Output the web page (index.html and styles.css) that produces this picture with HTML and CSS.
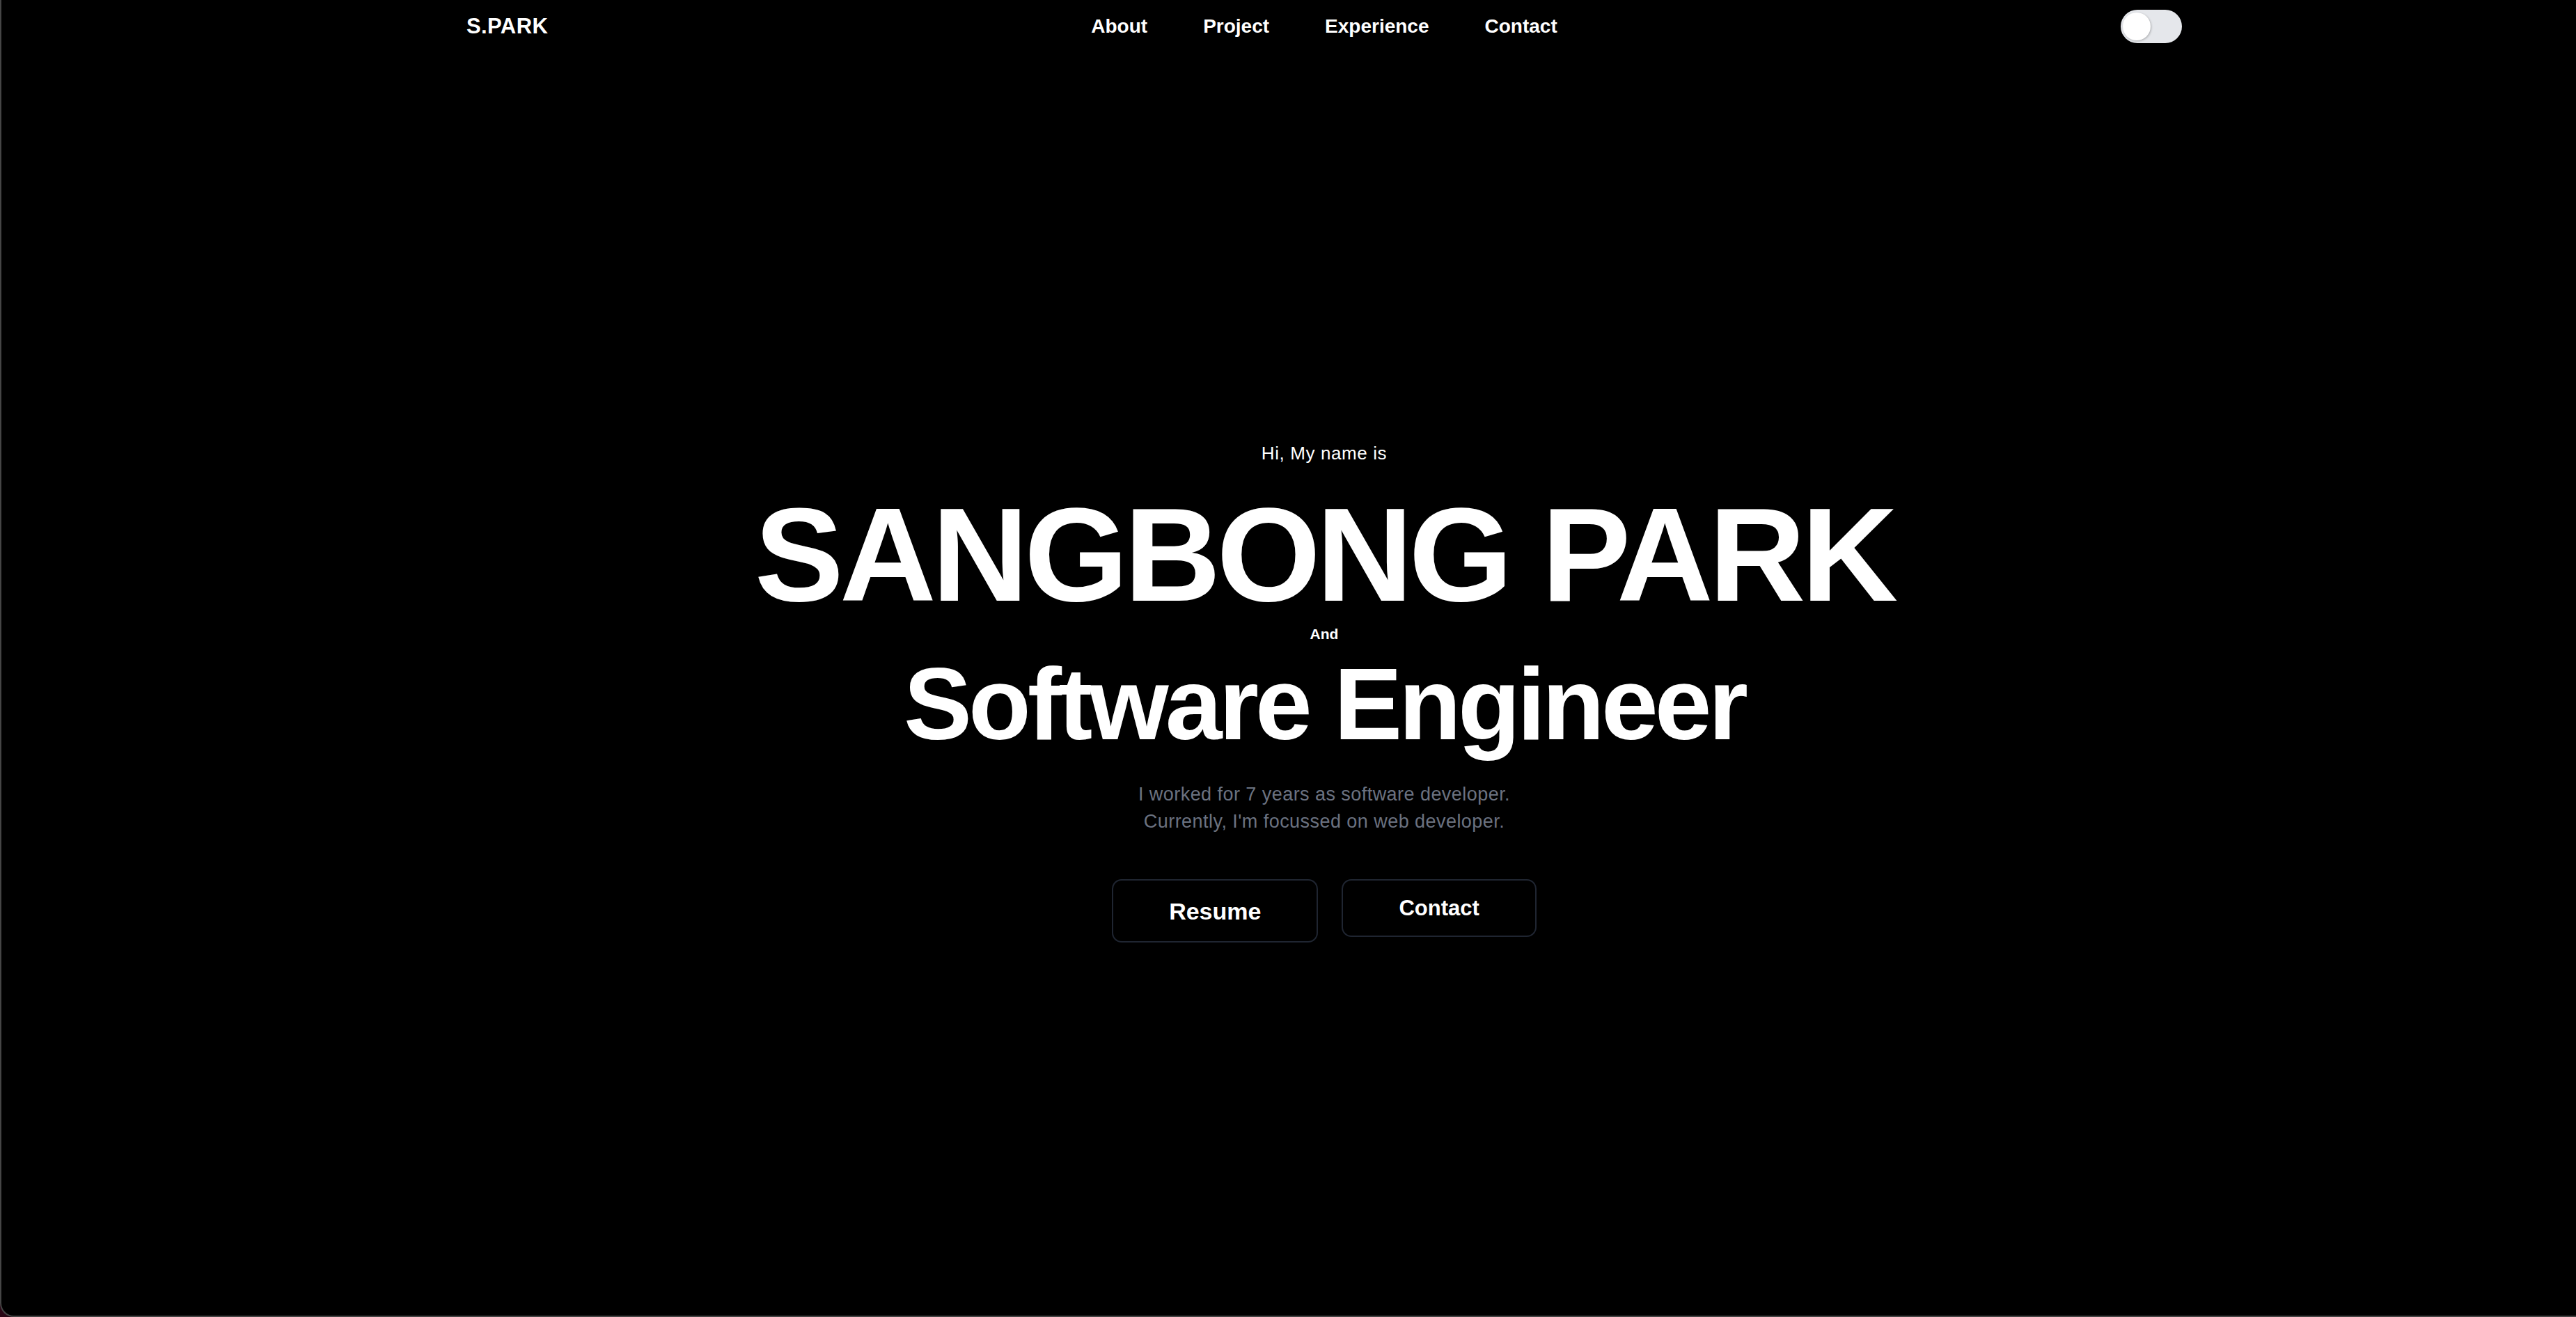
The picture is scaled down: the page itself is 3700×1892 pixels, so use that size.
FILE: index.html
```html
<!DOCTYPE html>
<html lang="en">
<head>
<meta charset="utf-8">
<title>S.PARK</title>
<link rel="stylesheet" href="styles.css">
</head>
<body>
<div class="window">
  <header class="header">
    <a class="logo" href="#">S.PARK</a>
    <nav class="nav">
      <a class="nav-link" href="#about">About</a>
      <a class="nav-link" href="#project">Project</a>
      <a class="nav-link" href="#experience">Experience</a>
      <a class="nav-link" href="#contact">Contact</a>
    </nav>
    <div class="toggle"><span class="knob"></span></div>
  </header>
  <main class="hero">
    <p class="greeting">Hi, My name is</p>
    <h1 class="name">SANGBONG PARK</h1>
    <p class="and">And</p>
    <h2 class="role">Software Engineer</h2>
    <p class="desc">I worked for 7 years as software developer.<br>Currently, I'm focussed on web developer.</p>
    <div class="actions">
      <a class="btn btn-resume" href="#">Resume</a>
      <a class="btn btn-contact" href="#">Contact</a>
    </div>
  </main>
</div>
</body>
</html>
```

FILE: styles.css
```css
* { box-sizing: border-box; }
html, body { margin: 0; padding: 0; }
body {
  background: #2a0715;
  font-family: "Liberation Sans", Arial, Helvetica, sans-serif;
  color: #fff;
}
.window {
  min-height: 100vh;
  background: #000;
  border-left: 2px solid #454545;
  border-bottom: 2px solid #454545;
  border-bottom-left-radius: 20px;
  padding-left: 102px;
}
.header {
  width: 2464px;
  margin: 0 auto;
  height: 76px;
  display: grid;
  grid-template-columns: 1fr auto 1fr;
  align-items: center;
}
.logo {
  justify-self: start;
  font-size: 31px;
  font-weight: 700;
  letter-spacing: 0.4px;
  color: #fff;
  text-decoration: none;
}
.nav { display: flex; gap: 80px; }
.nav-link {
  font-size: 28px;
  font-weight: 700;
  color: #fff;
  text-decoration: none;
}
.toggle {
  justify-self: end;
  position: relative;
  width: 88px;
  height: 48px;
  border-radius: 24px;
  background: #e5e7eb;
}
.knob {
  position: absolute;
  left: 3px;
  top: 4px;
  width: 40px;
  height: 40px;
  border-radius: 50%;
  background: #fff;
  box-shadow: 1px 1px 3px rgba(0,0,0,0.25);
}
.hero {
  display: flex;
  flex-direction: column;
  align-items: center;
  text-align: center;
  padding-top: 562px;
}
.greeting {
  margin: 0;
  font-size: 26px;
  line-height: 26px;
  letter-spacing: 0.6px;
}
.name {
  margin: 36.5px 0 0;
  font-size: 192px;
  line-height: 192px;
  font-weight: 700;
  letter-spacing: -0.031em;
}
.and {
  margin: 7.5px 0 0;
  font-size: 21px;
  line-height: 21px;
  font-weight: 700;
}
.role {
  margin: 16.6px 0 0;
  font-size: 147px;
  line-height: 147px;
  font-weight: 700;
  letter-spacing: -0.033em;
}
.desc {
  margin: 37.5px 0 0;
  font-size: 27px;
  line-height: 39px;
  letter-spacing: 0.45px;
  color: #6b7280;
}
.actions {
  display: flex;
  align-items: flex-start;
  gap: 34px;
  margin-top: 63px;
}
.btn {
  display: block;
  border: 2px solid #1f2531;
  border-radius: 14px;
  padding-left: 80px;
  padding-right: 80px;
  background: #000;
  color: #fff;
  font-weight: 700;
  text-decoration: none;
}
.btn-resume {
  font-size: 34px;
  line-height: 34px;
  padding-top: 26.5px;
  padding-bottom: 26.5px;
}
.btn-contact {
  font-size: 31px;
  line-height: 31px;
  padding-top: 24px;
  padding-bottom: 24px;
}
```
